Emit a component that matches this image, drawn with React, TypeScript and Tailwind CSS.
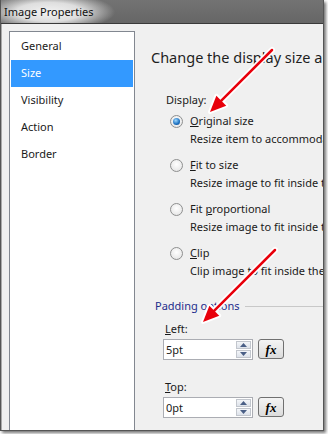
import React from "react";

const font = { fontFamily: '"Noto Sans", "Open Sans", sans-serif' };

function Radio({ checked }: { checked?: boolean }) {
  return (
    <span className="relative w-[13px] h-[13px] rounded-full border border-[#8e8f8f] bg-[radial-gradient(circle_at_50%_40%,#ffffff,#e0e0e0)] flex items-center justify-center shrink-0">
      {checked && (
        <span className="w-[7px] h-[7px] rounded-full bg-[radial-gradient(circle_at_40%_35%,#9fd9ff,#1a6fc0_60%,#0c3f7a)]" />
      )}
    </span>
  );
}

function RadioRow({ checked, label, desc, mt }: { checked?: boolean; label: React.ReactNode; desc: string; mt: string }) {
  return (
    <div className={mt}>
      <div className="flex items-center h-[16px] pl-[19px]">
        <Radio checked={checked} />
        <span className="ml-[7px] text-[11px] leading-[16px] whitespace-nowrap text-[#1a1a1a]">{label}</span>
      </div>
      <div className="mt-[2px] pl-[39px] text-[11px] leading-[16px] whitespace-nowrap text-[#1a1a1a]">{desc}</div>
    </div>
  );
}

function SpinInput({ value }: { value: string }) {
  return (
    <div className="flex items-start gap-[5px]">
      <div className="w-[90px] h-[21px] border border-[#abadb3] bg-white flex items-center">
        <span className="flex-1 pl-[2px] text-[11px] leading-[16px] text-[#1a1a1a]">{value}</span>
        <div className="flex flex-col gap-[1px] mr-[1px]">
          {[0, 1].map((i) => (
            <div key={i} className="w-[15px] h-[8px] border border-[#c2c6cd] bg-[linear-gradient(#f4f6f9,#dde2ea)] flex items-center justify-center">
              <svg width="7" height="4" viewBox="0 0 7 4">
                {i === 0 ? <path d="M0 4 L3.5 0 L7 4Z" fill="#4a5f86" /> : <path d="M0 0 L3.5 4 L7 0Z" fill="#4a5f86" />}
              </svg>
            </div>
          ))}
        </div>
      </div>
      <div className="w-[26px] h-[20px] rounded-[3px] border border-[#707070] bg-[linear-gradient(#f4f4f4,#dcdcdc)] flex items-center justify-center">
        <span className="italic font-bold text-[13px] leading-none text-black" style={{ fontFamily: '"Liberation Serif", serif' }}>fx</span>
      </div>
    </div>
  );
}

export default function App() {
  return (
    <div className="w-[328px] h-[434px] bg-white relative overflow-hidden" style={font}>
      <div className="w-[324px] h-[431px] flex flex-col shadow-[2px_2px_3px_rgba(0,0,0,0.55)] border-l border-r border-b border-[#555] overflow-hidden">
        <div className="h-[24px] shrink-0 bg-[radial-gradient(ellipse_66px_19px_at_48px_12px,rgba(242,242,242,1)_0%,rgba(228,228,228,0.95)_50%,rgba(107,107,107,0)_100%),linear-gradient(#737373,#666666)] flex items-center pl-[3px] border-b border-[#3a3a3a]">
          <span className="text-[11px] leading-[16px] text-[#111]">Image Properties</span>
        </div>
        <div className="flex-1 flex bg-[#f0f0f0] border-l border-[#aaa] pt-[7px] pl-[7px] overflow-hidden min-h-0">
          <div className="w-[126px] border border-[#828790] border-b-0 bg-white pt-[1px] shrink-0">
            {["General", "Size", "Visibility", "Action", "Border"].map((t) => (
              <div
                key={t}
                className={`mx-[1px] h-[27px] pl-[10px] flex items-center text-[11px] ${t === "Size" ? "bg-[#3399ff] text-white" : "text-[#1a1a1a]"}`}
              >
                {t}
              </div>
            ))}
          </div>
          <div className="flex-1 min-w-0 overflow-hidden pl-[16px] flex flex-col">
            <div className="mt-[15px] h-[22px] text-[14.5px] leading-[22px] whitespace-nowrap text-[#1e1e1e]">
              Change the display size and position of the image
            </div>
            <div className="mt-[24px] pl-[15px] text-[11px] leading-[16px] text-[#1a1a1a]">Display:</div>
            <RadioRow mt="mt-[5px]" checked label={<><u>O</u>riginal size</>} desc="Resize item to accommodate the image" />
            <RadioRow mt="mt-[10px]" label={<><u>F</u>it to size</>} desc="Resize image to fit inside the item" />
            <RadioRow mt="mt-[10px]" label={<>Fit <u>p</u>roportional</>} desc="Resize image to fit inside the item" />
            <RadioRow mt="mt-[10px]" label={<><u>C</u>lip</>} desc="Clip image to fit inside the item" />
            <div className="mt-[19px] pl-[4px] flex items-center h-[16px]">
              <span className="text-[11px] leading-[16px] text-[#1e2d8c] whitespace-nowrap">Padding options</span>
              <div className="flex-1 ml-[5px] h-px bg-[#c8c8c8]" />
            </div>
            <div className="mt-[7px] pl-[14px] text-[11px] leading-[16px] text-[#1a1a1a]"><u>L</u>eft:</div>
            <div className="mt-[2px] pl-[12px]"><SpinInput value="5pt" /></div>
            <div className="mt-[19px] pl-[14px] text-[11px] leading-[16px] text-[#1a1a1a]"><u>T</u>op:</div>
            <div className="mt-[2px] pl-[12px]"><SpinInput value="0pt" /></div>
          </div>
        </div>
      </div>
      <svg className="absolute left-0 top-0 pointer-events-none" width="328" height="434" viewBox="0 0 328 434">
        {[
          [272, 50, 210, 112],
          [275, 250, 203, 322],
        ].map(([x1, y1, x2, y2], i) => {
          const dx = x2 - x1, dy = y2 - y1;
          const len = Math.hypot(dx, dy);
          const ux = dx / len, uy = dy / len;
          const hl = 16, hw = 7;
          const bx = x2 - ux * hl, by = y2 - uy * hl;
          const p = `${x2},${y2} ${bx - uy * hw},${by + ux * hw} ${bx + uy * hw},${by - ux * hw}`;
          return (
            <g key={i}>
              <line x1={x1} y1={y1} x2={bx} y2={by} stroke="white" strokeWidth="6" strokeLinecap="round" />
              <polygon points={p} fill="white" stroke="white" strokeWidth="4" strokeLinejoin="round" />
              <line x1={x1} y1={y1} x2={bx} y2={by} stroke="#e8000b" strokeWidth="2.5" strokeLinecap="round" />
              <polygon points={p} fill="#e8000b" />
            </g>
          );
        })}
      </svg>
    </div>
  );
}
